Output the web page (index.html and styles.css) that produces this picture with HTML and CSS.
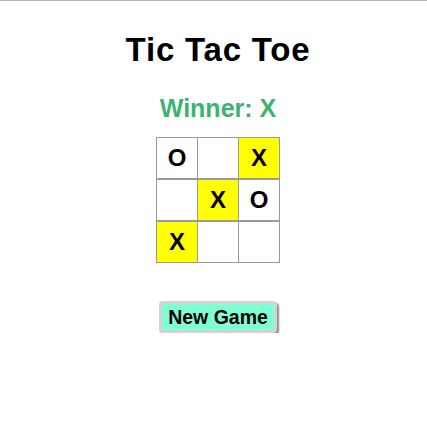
FILE: index.html
```html
<!DOCTYPE html>
<html>
<head>
<meta charset="utf-8">
<link rel="stylesheet" href="styles.css">
</head>
<body>
<div class="app">
  <h1 class="title">Tic Tac Toe</h1>
  <div class="status">Winner: X</div>
  <div class="board">
    <div class="row">
      <div class="cell">O</div>
      <div class="cell"></div>
      <div class="cell win">X</div>
    </div>
    <div class="row">
      <div class="cell"></div>
      <div class="cell win">X</div>
      <div class="cell">O</div>
    </div>
    <div class="row">
      <div class="cell win">X</div>
      <div class="cell"></div>
      <div class="cell"></div>
    </div>
  </div>
  <button class="reset">New Game</button>
</div>
</body>
</html>
```
FILE: styles.css
```css
html, body {
  margin: 0;
  padding: 0;
  background: #fff;
}
body {
  border-top: 1px solid #b4b4b4;
  font-family: "Liberation Sans", Arial, sans-serif;
}
.app {
  display: flex;
  flex-direction: column;
  align-items: center;
  padding: 30px 0 0 9px;
}
.title {
  margin: 0;
  font-size: 33px;
  line-height: 38px;
  font-weight: bold;
  letter-spacing: 0.8px;
  color: #000;
}
.status {
  margin-top: 25px;
  font-size: 25px;
  line-height: 29px;
  font-weight: bold;
  color: #3cb371;
}
.board {
  margin-top: 14px;
  display: flex;
  flex-direction: column;
}
.row {
  display: flex;
}
.cell {
  box-sizing: border-box;
  width: 42px;
  height: 42px;
  border: 1px solid #999;
  display: flex;
  align-items: center;
  justify-content: center;
  font-size: 24px;
  font-weight: bold;
  color: #000;
  background: #fff;
}
.cell + .cell {
  margin-left: -1px;
}
.cell.win {
  background: #ffff00;
}
.reset {
  margin-top: 38px;
  box-sizing: border-box;
  width: 118px;
  height: 32px;
  padding: 0;
  border: 3px solid #d3d3d3;
  border-radius: 4px;
  box-shadow: 2px 2px 2px #8a8a8a;
  background: #7fffd4;
  font-family: "Liberation Sans", Arial, sans-serif;
  font-size: 19.5px;
  line-height: 26px;
  font-weight: bold;
  color: #000;
  white-space: nowrap;
}
```
